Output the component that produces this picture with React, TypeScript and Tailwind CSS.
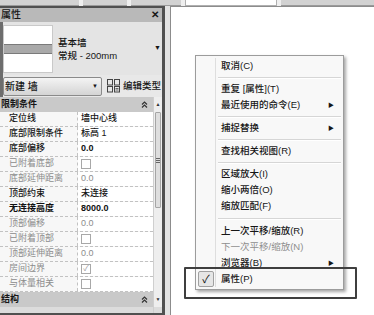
import React from 'react';

type Row = {
  label: string;
  value?: string;
  check?: 'empty' | 'checked';
  dim?: boolean;
  boldLabel?: boolean;
  boldValue?: boolean;
};

const rows: Row[] = [
  { label: '定位线', value: '墙中心线' },
  { label: '底部限制条件', value: '标高 1' },
  { label: '底部偏移', value: '0.0', boldValue: true },
  { label: '已附着底部', check: 'empty', dim: true },
  { label: '底部延伸距离', value: '0.0', dim: true },
  { label: '顶部约束', value: '未连接' },
  { label: '无连接高度', value: '8000.0', boldLabel: true, boldValue: true },
  { label: '顶部偏移', value: '0.0', dim: true },
  { label: '已附着顶部', check: 'empty', dim: true },
  { label: '顶部延伸距离', value: '0.0', dim: true },
  { label: '房间边界', check: 'checked', dim: true },
  { label: '与体量相关', check: 'empty', dim: true },
];

type MenuEntry =
  | { sep: true; h?: string }
  | { sep?: false; text: string; sub?: boolean; disabled?: boolean; checked?: boolean };

const menu: MenuEntry[] = [
  { text: '取消(C)' },
  { sep: true },
  { text: '重复 [属性](T)' },
  { text: '最近使用的命令(E)', sub: true },
  { sep: true },
  { text: '捕捉替换', sub: true },
  { sep: true },
  { text: '查找相关视图(R)' },
  { sep: true },
  { text: '区域放大(I)' },
  { text: '缩小两倍(O)' },
  { text: '缩放匹配(F)' },
  { sep: true, h: 'h-[9px]' },
  { text: '上一次平移/缩放(R)' },
  { text: '下一次平移/缩放(N)', disabled: true },
  { text: '浏览器(B)', sub: true },
  { text: '属性(P)', checked: true },
];

function DoubleUp() {
  return (
    <svg width="7" height="7" viewBox="0 0 7 7" className="text-[#333]">
      <path d="M1 3.5 L3.5 1 L6 3.5 M1 6.5 L3.5 4 L6 6.5" fill="none" stroke="currentColor" strokeWidth="1.2" />
    </svg>
  );
}

function CheckBox({ checked }: { checked?: boolean }) {
  return (
    <div className="w-[10px] h-[10px] border border-[#a8a8a8] bg-white flex items-center justify-center text-[8px] leading-none text-[#999]">
      {checked ? '✓' : ''}
    </div>
  );
}

function EditTypeIcon() {
  return (
    <svg width="13" height="14" viewBox="0 0 13 14" className="text-[#444]">
      <rect x="0.5" y="0.5" width="5" height="5.5" fill="none" stroke="currentColor" />
      <rect x="0.5" y="7.5" width="5" height="5.5" fill="none" stroke="currentColor" />
      <rect x="7.5" y="0.5" width="5" height="5.5" fill="none" stroke="currentColor" />
      <rect x="7.5" y="7.5" width="5" height="5.5" fill="none" stroke="currentColor" />
      <path d="M8.5 9.5 H11.5 M8.5 11 H11.5" stroke="currentColor" strokeWidth="0.8" />
    </svg>
  );
}

export default function App() {
  return (
    <div className="relative w-[374px] h-[315px] overflow-hidden bg-[#e9e9e9] flex flex-col font-['Liberation_Sans','Noto_Sans_CJK_SC',sans-serif] text-[#161616]">
      {/* tab strip */}
      <div className="h-[6px] flex gap-[4px] bg-[#efefef]">
        <div className="w-[79px] bg-[#d2d2d2] border-b border-[#9a9a9a]" />
        <div className="w-[44px] bg-[#d2d2d2] border-b border-[#9a9a9a]" />
        <div className="w-[50px] bg-[#d2d2d2] border-b border-[#9a9a9a]" />
        <div className="w-[92px] bg-white border-x border-b border-[#b0b0b0]" />
        <div className="flex-1 bg-[#d2d2d2] border-b border-[#9a9a9a]" />
      </div>

      <div className="flex flex-1 min-h-0">
        {/* properties palette */}
        <div className="w-[165px] flex flex-col border-t-2 border-r-[3px] border-b-2 border-[#505050] bg-[#ececec]">
          <div className="h-[14px] bg-[#b9b9b9] flex items-center justify-between pl-[1px] pr-[3px] text-[10px] leading-none">
            <span className="font-medium">属性</span>
            <span className="font-bold text-[10px]">✕</span>
          </div>

          <div className="h-[53px] flex border-l-[3px] border-[#6d6d6d] bg-[#e4e4e4]">
            <div className="mt-[3px] mb-[2px] w-[50px] bg-white border border-[#c9c9c9] flex flex-col justify-center">
              <div className="h-[10px] bg-[#a9a9a9] border-y border-[#7a7a7a]" />
            </div>
            <div className="ml-[5px] flex flex-col justify-center text-[9.5px] leading-[13px] font-medium">
              <span>基本墙</span>
              <span>常规 - 200mm</span>
            </div>
            <div className="ml-auto mr-[1px] flex items-center text-[7px]">▼</div>
          </div>

          <div className="h-[22px] flex items-center border-l-[3px] border-[#6d6d6d] bg-[#e8e8e8]">
            <div className="w-[99px] h-[19px] border border-[#8a8a8a] rounded-[2px] bg-gradient-to-b from-[#f4f4f4] to-[#d4d4d4] flex items-center justify-between pl-[1px] pr-[3px] text-[10px] font-medium">
              <span>新建 墙</span>
              <span className="text-[6px]">▼</span>
            </div>
            <div className="ml-[5px] flex items-center gap-[3px] text-[9.5px] font-medium">
              <EditTypeIcon />
              <span>编辑类型</span>
            </div>
          </div>

          <div className="flex flex-1 min-h-0">
            <div className="w-[153px] flex flex-col text-[9px]">
              <div className="h-[15px] bg-[#c9c9c9] flex items-center justify-between pl-[1px] pr-[5px] font-bold">
                <span>限制条件</span>
                <DoubleUp />
              </div>
              {rows.map((r) => (
                <div key={r.label} className="h-[15px] flex border-b border-dashed border-[#c2c2c2] bg-[#f7f7f7]">
                  <div
                    className={`w-[78px] pl-[9px] flex items-center border-r border-dashed border-[#c2c2c2] ${
                      r.dim ? 'text-[#8c8c8c]' : r.boldLabel ? 'text-[#111] font-bold' : 'text-[#161616] font-medium'
                    }`}
                  >
                    {r.label}
                  </div>
                  <div
                    className={`flex-1 pl-[3px] flex items-center bg-white ${
                      r.dim ? 'text-[#8c8c8c]' : r.boldValue ? 'text-[#111] font-bold' : 'text-[#161616] font-medium'
                    }`}
                  >
                    {r.check ? <CheckBox checked={r.check === 'checked'} /> : r.value}
                  </div>
                </div>
              ))}
              <div className="h-[15px] bg-[#c9c9c9] flex items-center justify-between pl-[1px] pr-[5px] font-bold">
                <span>结构</span>
                <DoubleUp />
              </div>
              <div className="flex-1 bg-[#dcdcdc]" />
            </div>
            <div className="w-[9px] flex flex-col bg-[#eeeeee] border-l border-[#cfcfcf]">
              <div className="h-[15px] flex items-center justify-center text-[5px] text-[#333]">▲</div>
              <div className="h-[96px] mx-[1px] bg-[#dedede] border border-[#a5a5a5] rounded-[1px] flex flex-col items-center justify-center gap-[1px]">
                <div className="w-[4px] h-px bg-[#666]" />
                <div className="w-[4px] h-px bg-[#666]" />
                <div className="w-[4px] h-px bg-[#666]" />
              </div>
              <div className="flex-1" />
              <div className="h-[15px] flex items-center justify-center text-[5px] text-[#333]">▼</div>
              <div className="h-[6px] bg-[#dcdcdc]" />
            </div>
          </div>
        </div>

        <div className="w-[5px] bg-[#e3e3e3]" />
        <div className="flex-1 bg-white border-l border-t border-[#8c8c8c]" />
      </div>

      {/* context menu */}
      <div className="absolute left-[195px] top-[55px] w-[149px] bg-[#f8f8f8] border border-[#9c9c9c] shadow-[2px_2px_3px_rgba(0,0,0,0.35)] pt-[2px] pb-[2px] text-[9.5px]">
        {menu.map((m, i) =>
          m.sep ? (
            <div key={i} className={`${m.h ?? 'h-[7px]'} flex`}>
              <div className="w-[20px] border-r border-[#dedede]" />
              <div className="flex-1 flex items-center pl-[2px] pr-[2px]">
                <div className="w-full h-[2px] border-t border-[#d6d6d6] border-b border-b-white" />
              </div>
            </div>
          ) : (
            <div key={i} className="h-[16px] flex">
              <div className="w-[20px] border-r border-[#dedede] flex items-center justify-center">
                {m.checked && (
                  <div className="w-[16px] h-[16px] ml-[1px] border border-[#a0a0a0] rounded-[2px] bg-[#e6e6e6] flex items-center justify-center text-[11px] leading-none text-[#111]">
                    ✓
                  </div>
                )}
              </div>
              <div
                className={`flex-1 flex items-center justify-between pl-[5px] pr-[9px] ${
                  m.disabled ? 'text-[#8e8e8e]' : 'text-[#161616] font-medium'
                }`}
              >
                <span>{m.text}</span>
                {m.sub && <span className="text-[6px]">▶</span>}
              </div>
            </div>
          ),
        )}
      </div>

      {/* highlight frame */}
      <div className="absolute left-[184px] top-[267px] w-[173px] h-[32px] border-2 border-[#3f3f3f] rounded-[1px]" />
    </div>
  );
}
